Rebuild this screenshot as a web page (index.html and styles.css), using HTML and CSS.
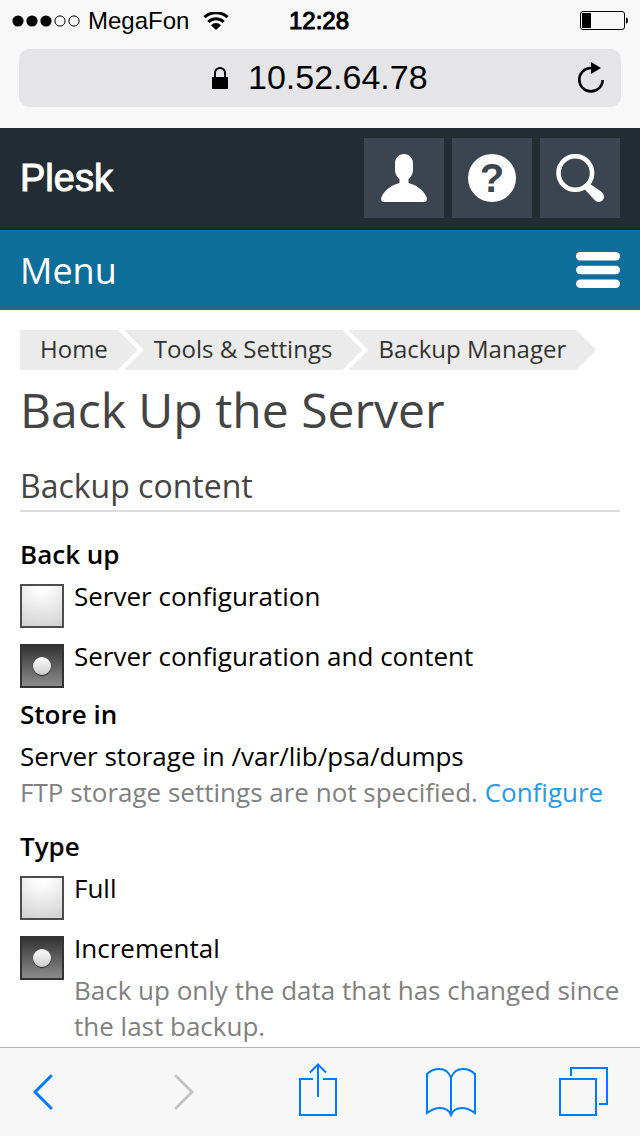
FILE: index.html
```html
<!DOCTYPE html>
<html lang="en">

<head>
    <meta charset="UTF-8">
    <meta name="viewport" content="width=device-width, initial-scale=1.0">
    <title>Back Up the Server</title>
    <link rel="stylesheet" href="styles.css">
</head>

<body>
    <div class="browser-top">
        <div class="status-bar">
            <div class="carrier">
                <svg class="signal" width="68" height="12" viewBox="0 0 68 12">
                    <circle cx="6" cy="6" r="5.6" />
                    <circle cx="20" cy="6" r="5.6" />
                    <circle cx="34" cy="6" r="5.6" />
                    <circle cx="48" cy="6" r="5.1" fill="none" stroke="#000" />
                    <circle cx="62" cy="6" r="5.1" fill="none" stroke="#000" />
                </svg>
                <span>MegaFon</span>
                <svg class="wifi" width="26" height="18" viewBox="0 0 26 18">
                    <path d="M1.5 5.2a17 17 0 0 1 23 0M5.3 10a11 11 0 0 1 15.400 0" fill="none" stroke="#000" stroke-width="3" />
                    <path d="M8 13.200a7 7 0 0 1 10 0L13 18z" />
                </svg>
            </div>
            <span class="clock">12:28</span>
            <svg class="battery" width="46" height="20" viewBox="0 0 46 20">
                <rect x="0.5" y="0.5" width="44" height="18" rx="2.5" fill="none" stroke="#000" />
                <rect x="2" y="2" width="9" height="15" />
                <path d="M46 6.5c1.5 0 2 1.5 2 3s-.5 3-2 3z" />
            </svg>
        </div>
        <div class="address-bar">
            <div class="address">
                <svg width="16" height="22" viewBox="0 0 16 22">
                    <path d="M3 11V6a5 5 0 0 1 10 0V11" fill="none" stroke="#000" stroke-width="2" />
                    <rect y="10" width="16" height="12" />
                </svg>
                <input type="text" value="10.52.64.78" aria-label="Address">
            </div>
            <button type="button" class="reload" aria-label="Reload">
                <svg width="26" height="32" viewBox="0 0 26 32">
                    <path d="M14 6H13A11.7 11.7 0 1 0 24.7 18" fill="none" stroke="#000" stroke-width="2.6" />
                    <path d="M13 0l10 6-10 6z" />
                </svg>
            </button>
        </div>
    </div>

    <header class="header">
        <a href="#" class="logo">Plesk</a>
        <div class="header-actions">
            <button type="button" aria-label="Account">
                <svg width="48" height="48" viewBox="0 0 48 48">
                    <path d="M24 0c5 0 9 4 9 9v7c0 4-2 7-4.500 9v4c8 2 15 7 18 14 1 3 0 5-3 5h-39c-3 0-4-2-3-5 3-7 10-12 18-14v-4c-2.500-2-4.500-5-4.500-9V9c0-5 4-9 9-9z" />
                </svg>
            </button>
            <button type="button" aria-label="Help">
                <svg width="48" height="48" viewBox="0 0 48 48">
                    <circle cx="24" cy="24" r="24" />
                    <text class="help-mark" x="24" y="38" text-anchor="middle">?</text>
                </svg>
            </button>
            <button type="button" aria-label="Search">
                <svg width="48" height="48" viewBox="0 0 48 48">
                    <circle cx="19.3" cy="19" r="16.800" fill="none" stroke="#fff" stroke-width="4.600" />
                    <path d="M34 30L45 37.500c3 2.200 3.800 5.500 2 8.200s-6 3-8.500.300L28.500 35z" />
                </svg>
            </button>
        </div>
    </header>

    <button type="button" class="menu">
        <span>Menu</span>
        <svg width="44" height="36" viewBox="0 0 44 36">
            <rect width="44" height="8.400" rx="4.200" />
            <rect y="13.800" width="44" height="8.400" rx="4.200" />
            <rect y="27.600" width="44" height="8.400" rx="4.200" />
        </svg>
    </button>

    <main class="content">
        <nav class="breadcrumbs">
            <a href="#">Home</a>
            <a href="#">Tools &amp; Settings</a>
            <a href="#">Backup Manager</a>
        </nav>

        <h1>Back Up the Server</h1>

        <form>
            <h2>Backup content</h2>

            <fieldset>
                <legend>Back up</legend>
                <div class="option">
                    <input type="radio" name="content" id="contentConfig">
                    <label for="contentConfig">Server configuration</label>
                </div>
                <div class="option">
                    <input type="radio" name="content" id="contentAll" checked>
                    <label for="contentAll">Server configuration and content</label>
                </div>
            </fieldset>

            <fieldset class="storage">
                <legend>Store in</legend>
                <p>Server storage in /var/lib/psa/dumps</p>
                <p class="hint">FTP storage settings are not specified. <a href="#">Configure</a></p>
            </fieldset>

            <fieldset>
                <legend>Type</legend>
                <div class="option">
                    <input type="radio" name="type" id="typeFull">
                    <label for="typeFull">Full</label>
                </div>
                <div class="option">
                    <input type="radio" name="type" id="typeIncremental" aria-describedby="incrementalHint" checked>
                    <div>
                        <label for="typeIncremental">Incremental</label>
                        <p class="hint" id="incrementalHint">Back up only the data that has changed since the last backup.</p>
                    </div>
                </div>
            </fieldset>
        </form>
    </main>

    <div class="toolbar">
        <button type="button" aria-label="Back">
            <svg class="chevron" width="20" height="60" viewBox="0 0 20 60">
                <path d="M18 14L2 30l16 16" />
            </svg>
        </button>
        <button type="button" aria-label="Forward" disabled>
            <svg class="chevron" width="20" height="60" viewBox="0 0 20 60">
                <path d="M2 14L18 30 2 46" />
            </svg>
        </button>
        <button type="button" aria-label="Share">
            <svg width="38" height="60" viewBox="0 0 38 60">
                <path d="M14 17H1v36h36V17H24M19 35V2M11 10.500l8-8 8 8" />
            </svg>
        </button>
        <button type="button" aria-label="Bookmarks">
            <svg width="50" height="60" viewBox="0 0 50 60">
                <path d="M1 51V12c3-3 7-5 12-5 6 0 10 3 12 9 2-6 6-9 12-9 5 0 9 2 12 5v39c-4-3-8-5-13-5-6 0-9 2-11 7-2-5-5-7-11-7-5 0-9 2-13 5zM25 16v37" />
            </svg>
        </button>
        <button type="button" aria-label="Tabs">
            <svg width="50" height="60" viewBox="0 0 50 60">
                <path d="M1 17h36v36H1zM12 14V6h36v36h-8" />
            </svg>
        </button>
    </div>
</body>

</html>
```

FILE: styles.css
```css
* {
    box-sizing: border-box;
}

body {
    margin: 0;
    min-height: 100vh;
    display: flex;
    flex-direction: column;
    background: #fff;
    color: #000;
    font-family: "Open Sans", sans-serif;
    font-size: 26px;
    line-height: 36px;
}

button {
    padding: 0;
    border: none;
    background: none;
    font: inherit;
    cursor: pointer;
}

svg {
    display: block;
}

/* Browser status and address bars */
.browser-top {
    height: 128px;
    background: #f8f8f8;
    font-family: "Liberation Sans", Arial, sans-serif;
}

.status-bar {
    display: grid;
    grid-template-columns: 1fr auto 1fr;
    align-items: center;
    height: 41px;
    padding: 0 14px 0 12px;
    font-size: 24px;
}

.carrier {
    display: flex;
    align-items: center;
    gap: 8px;
}

.wifi {
    margin-left: 6px;
}

.clock {
    -webkit-text-stroke: 1px #000;
}

.battery {
    justify-self: end;
    overflow: visible;
}

.address-bar {
    display: grid;
    grid-template-columns: 1fr auto 1fr;
    align-items: center;
    height: 58px;
    margin: 8px 19px 0;
    background: #e5e5e7;
    border-radius: 10px;
}

.address {
    grid-column: 2;
    display: flex;
    align-items: center;
    gap: 20px;
}

.address input {
    width: 180px;
    height: 48px;
    padding: 0 0 2px;
    border: none;
    background: none;
    color: #000;
    font: inherit;
    font-size: 34px;
}

.reload {
    justify-self: end;
    margin-right: 17px;
}

/* Plesk header */
.header {
    display: flex;
    align-items: center;
    justify-content: space-between;
    padding: 10px 20px;
    background: #232b33;
    border-bottom: 2px solid #1c2329;
}

.logo {
    color: #fff;
    font-family: "Liberation Sans", Arial, sans-serif;
    font-size: 38px;
    text-decoration: none;
    -webkit-text-stroke: 1px #fff;
}

.header-actions {
    display: flex;
    gap: 8px;
}

.header-actions button {
    display: flex;
    align-items: center;
    justify-content: center;
    width: 80px;
    height: 80px;
    background: #3a4550;
}

.header-actions svg {
    fill: #fff;
}

.help-mark {
    fill: #3a4550;
    font-family: "Liberation Sans", Arial, sans-serif;
    font-size: 40px;
    font-weight: bold;
}

.menu {
    display: flex;
    align-items: center;
    justify-content: space-between;
    height: 80px;
    padding: 0 20px;
    background: #0d6e99;
    color: #fff;
    font-size: 36px;
}

.menu span {
    padding-top: 2px;
}

.menu svg {
    fill: #fff;
}

/* Page content */
.content {
    flex: 1;
    padding: 20px 20px 0;
}

.breadcrumbs {
    display: flex;
    font-size: 24px;
    line-height: 38px;
}

.breadcrumbs a {
    height: 40px;
    margin-left: -14px;
    padding: 0 30px;
    background: #ebebeb;
    color: #333;
    text-decoration: none;
    white-space: nowrap;
    clip-path: polygon(0 0, calc(100% - 20px) 0, 100% 50%, calc(100% - 20px) 100%, 0 100%, 20px 50%);
}

.breadcrumbs a:first-child {
    margin-left: 0;
    padding-left: 20px;
    clip-path: polygon(0 0, calc(100% - 20px) 0, 100% 50%, calc(100% - 20px) 100%, 0 100%);
}

h1,
h2 {
    margin: 0;
    color: #444;
    font-weight: normal;
}

h1 {
    margin: 10px 0 22px;
    font-size: 48px;
    line-height: 60px;
}

h2 {
    margin-bottom: 24px;
    border-bottom: 2px solid #ddd;
    font-size: 32px;
    line-height: 48px;
}

fieldset {
    min-width: 0;
    margin: 0 0 8px;
    padding: 0;
    border: none;
}

fieldset:last-child {
    margin-bottom: 0;
}

legend {
    margin-bottom: 6px;
    padding: 0;
    font-weight: 600;
}

p {
    margin: 0;
}

.storage {
    margin-bottom: 18px;
}

.option {
    display: flex;
    align-items: flex-start;
    gap: 10px;
}

.option + .option {
    margin-top: 10px;
}

.option .hint {
    margin-top: 6px;
}

.option label {
    display: block;
}

.hint {
    color: #808080;
}

.hint a {
    color: #2899e6;
    text-decoration: none;
}

input[type="radio"] {
    appearance: none;
    display: flex;
    align-items: center;
    justify-content: center;
    flex: none;
    width: 44px;
    height: 44px;
    margin: 6px 0 0;
    border: 2px solid #4d4d4d;
    background: radial-gradient(circle at 50% 0, #fff 10%, #ccc 110%);
}

input[type="radio"]:checked {
    border-color: #333;
    background: linear-gradient(#333, #8c8c8c);
}

input[type="radio"]:checked::before {
    content: "";
    width: 18px;
    height: 18px;
    border-radius: 50%;
    background: linear-gradient(#fff, #ccc);
    box-shadow: 0 1px 1px #222;
}

/* Browser toolbar, columns spaced like the icons */
.toolbar {
    position: sticky;
    bottom: 0;
    display: grid;
    grid-template-columns: 141fr 125fr 127fr 133fr auto;
    align-items: center;
    justify-items: start;
    height: 89px;
    padding: 0 31px 0 33px;
    background: #f7f7f7;
    border-top: 1px solid #b2b2b2;
}

.toolbar svg {
    fill: none;
    stroke: #007aff;
    stroke-width: 2px;
}

.toolbar .chevron {
    stroke-width: 3px;
    stroke-linecap: round;
}

.toolbar button:disabled svg {
    stroke: #c4c4c4;
}
```
